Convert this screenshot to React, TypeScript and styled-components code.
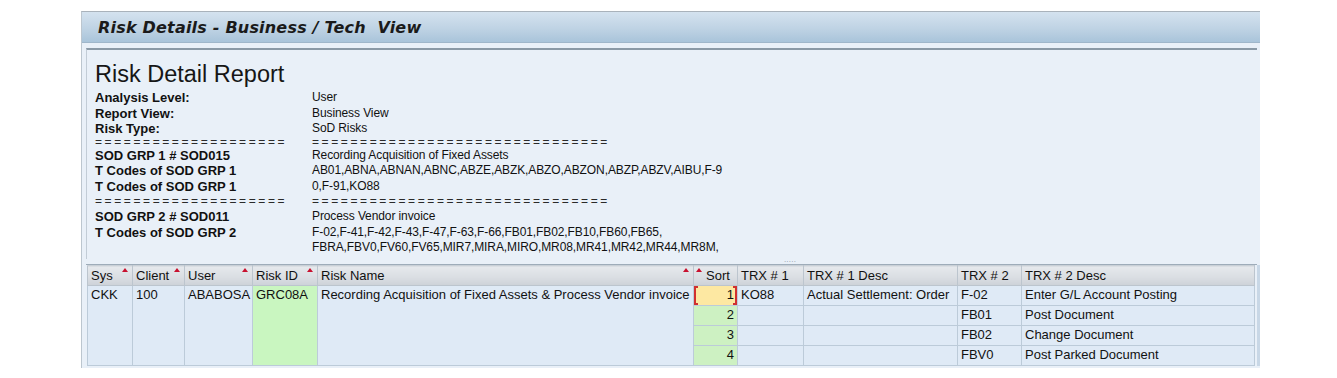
import React from 'react';
import styled, {createGlobalStyle} from 'styled-components';

const GlobalStyle = createGlobalStyle`
  html, body {
    margin: 0;
    padding: 0;
    background: #ffffff;
  }
  body {
    font-family: "Liberation Sans", Arial, sans-serif;
  }
`;

const Frame = styled.div`
  margin: 11px 0 0 81px;
  width: 1178px;
  border-top: 1px solid #a9b2bb;
  border-left: 1px solid #bcc6cf;
  background: #e9f0f8;
`;

const TitleBar = styled.div`
  height: 30px;
  display: flex;
  align-items: center;
  padding-left: 16px;
  background: linear-gradient(to bottom, #d4e2ef 0%, #bfd3e4 55%, #a9c4da 100%);
  border-bottom: 1px solid #9fb6ca;
  font-family: "DejaVu Sans", Verdana, sans-serif;
  font-weight: bold;
  font-style: italic;
  font-size: 16px;
  color: #1a1a1a;
  letter-spacing: 0.2px;
`;

const Body = styled.div`
  padding: 5px 3px 2px 4px;
`;

const ReportBox = styled.div`
  border-top: 2px solid #8a99a6;
  border-left: 1px solid #c2ccd6;
  padding: 10px 0 0 8px;
  height: 199px;
  color: #111;
`;

const ReportTitle = styled.div`
  font-size: 23.5px;
  line-height: 28px;
  color: #161616;
  margin-bottom: 2px;
`;

const Lines = styled.div`
  display: grid;
  grid-template-columns: 217px 1fr;
  font-size: 12px;
  line-height: 15.5px;
`;

const Label = styled.div`
  font-weight: bold;
  font-size: 13px;
`;

const Value = styled.div`
  letter-spacing: -0.1px;
`;

const Rule = styled.div<{ $tall?: boolean }>`
  font-size: 12px;
  letter-spacing: 2.6px;
  line-height: ${p => (p.$tall ? '15px' : '11px')};
  height: ${p => (p.$tall ? '15px' : '11px')};
  white-space: nowrap;
  color: #2a2a2a;
`;

const Splitter = styled.div`
  height: 5px;
  display: flex;
  justify-content: center;
  align-items: flex-start;
  padding-left: 237px;
  border-bottom: 1px solid #9eacb9;
  font-size: 8px;
  line-height: 2px;
  color: #8d99a5;
  letter-spacing: 0.2px;
`;

const GridWrap = styled.div`
  margin-left: 1px;
  width: 1170px;
  border-right: 3px solid #c8d7e6;
`;

const Table = styled.table`
  border-collapse: collapse;
  table-layout: fixed;
  width: 1167px;
  font-size: 13px;
  color: #111;
`;

const Th = styled.th<{ $sort?: 'left' | 'right' }>`
  position: relative;
  height: 19px;
  padding: 0 3px;
  text-align: left;
  font-weight: normal;
  white-space: nowrap;
  background: linear-gradient(to bottom, #e6e9ed 0%, #d9dde2 60%, #cdd2d8 100%);
  border: 1px solid #bcc5ce;
  border-top: 1px solid #c9d0d7;
  padding-left: ${p => (p.$sort === 'left' ? '12px' : '3px')};
`;

const SortMark = styled.span<{ $side: 'left' | 'right' }>`
  position: absolute;
  top: 2px;
  ${p => (p.$side === 'left' ? 'left: 2px;' : 'right: 4px;')}
  width: 0;
  height: 0;
  border-left: 3px solid transparent;
  border-right: 3px solid transparent;
  border-bottom: 4px solid #c8102e;
`;

type Tone = 'plain' | 'key' | 'sort' | 'current';

const tones: Record<Tone, string> = {
  plain: '#dfeaf6',
  key: '#c9f6c0',
  sort: '#cdf1c2',
  current: '#fde8a2',
};

const Td = styled.td<{ $tone?: Tone; $right?: boolean }>`
  position: relative;
  height: 19px;
  padding: 0 3px;
  vertical-align: top;
  line-height: 18px;
  white-space: nowrap;
  overflow: hidden;
  background: ${p => tones[p.$tone || 'plain']};
  border: 1px solid #bccbd9;
  text-align: ${p => (p.$right ? 'right' : 'left')};
`;

const Bracket = styled.span<{ $side: 'left' | 'right' }>`
  position: absolute;
  top: 0;
  bottom: 0;
  ${p => (p.$side === 'left' ? 'left: 0; border-left: 2px solid #d03030;' : 'right: 0; border-right: 2px solid #d03030;')}
  width: 4px;
  border-top: 2px solid #d03030;
  border-bottom: 2px solid #d03030;
  box-sizing: border-box;
`;

const Hidden = styled.span`
  visibility: hidden;
`;

const reportLines: [string, string][] = [
  ['Analysis Level:', 'User'],
  ['Report View:', 'Business View'],
  ['Risk Type:', 'SoD Risks'],
  ['=', '='],
  ['SOD GRP 1 # SOD015', 'Recording Acquisition of Fixed Assets'],
  ['T Codes of SOD GRP 1', 'AB01,ABNA,ABNAN,ABNC,ABZE,ABZK,ABZO,ABZON,ABZP,ABZV,AIBU,F-9'],
  ['T Codes of SOD GRP 1', '0,F-91,KO88'],
  ['==', '=='],
  ['SOD GRP 2 # SOD011', 'Process Vendor invoice'],
  ['T Codes of SOD GRP 2', 'F-02,F-41,F-42,F-43,F-47,F-63,F-66,FB01,FB02,FB10,FB60,FB65,'],
  ['', 'FBRA,FBV0,FV60,FV65,MIR7,MIRA,MIRO,MR08,MR41,MR42,MR44,MR8M,'],
];

const columns = [
  {title: 'Sys', width: 45, sort: 'right'},
  {title: 'Client', width: 52, sort: 'right'},
  {title: 'User', width: 68, sort: 'right'},
  {title: 'Risk ID', width: 65, sort: 'right'},
  {title: 'Risk Name', width: 376, sort: 'right'},
  {title: 'Sort', width: 44, sort: 'left'},
  {title: 'TRX # 1', width: 66},
  {title: 'TRX # 1 Desc', width: 154},
  {title: 'TRX # 2', width: 64},
  {title: 'TRX # 2 Desc', width: 233},
] as { title: string; width: number; sort?: 'left' | 'right' }[];

const rows = [
  {sort: '1', trx1: 'KO88', desc1: 'Actual Settlement: Order', trx2: 'F-02', desc2: 'Enter G/L Account Posting'},
  {sort: '2', trx1: '', desc1: '', trx2: 'FB01', desc2: 'Post Document'},
  {sort: '3', trx1: '', desc1: '', trx2: 'FB02', desc2: 'Change Document'},
  {sort: '4', trx1: '', desc1: '', trx2: 'FBV0', desc2: 'Post Parked Document'},
];

const RULE_LEFT = '====================';
const RULE_RIGHT = '===============================';

function App() {
  return (
    <>
      <GlobalStyle/>
      <Frame>
        <TitleBar>Risk Details - Business / Tech&nbsp; View</TitleBar>
        <Body>
          <ReportBox>
            <ReportTitle>Risk Detail Report</ReportTitle>
            <Lines>
              {reportLines.map(([label, value], i) =>
                label.startsWith('=') ?
                  <React.Fragment key={i}>
                    <Rule $tall={label === '=='}>{RULE_LEFT}</Rule>
                    <Rule $tall={label === '=='}>{RULE_RIGHT}</Rule>
                  </React.Fragment> :
                  <React.Fragment key={i}>
                    <Label>{label || <Hidden>-</Hidden>}</Label>
                    <Value>{value}</Value>
                  </React.Fragment>
              )}
            </Lines>
          </ReportBox>
          <Splitter>.....</Splitter>
          <GridWrap>
            <Table>
              <colgroup>
                {columns.map(c => <col key={c.title} style={{width: c.width}}/>)}
              </colgroup>
              <thead>
                <tr>
                  {columns.map(c =>
                    <Th key={c.title} $sort={c.sort}>
                      {c.title}
                      {c.sort && <SortMark $side={c.sort}/>}
                    </Th>
                  )}
                </tr>
              </thead>
              <tbody>
                {rows.map((r, i) =>
                  <tr key={r.sort}>
                    {i === 0 &&
                      <>
                        <Td rowSpan={4}>CKK</Td>
                        <Td rowSpan={4}>100</Td>
                        <Td rowSpan={4}>ABABOSA</Td>
                        <Td rowSpan={4} $tone="key">GRC08A</Td>
                        <Td rowSpan={4}>Recording Acquisition of Fixed Assets &amp; Process Vendor invoice</Td>
                      </>
                    }
                    <Td $tone={i === 0 ? 'current' : 'sort'} $right>
                      {r.sort}
                      {i === 0 && <><Bracket $side="left"/><Bracket $side="right"/></>}
                    </Td>
                    <Td>{r.trx1}</Td>
                    <Td>{r.desc1}</Td>
                    <Td>{r.trx2}</Td>
                    <Td>{r.desc2}</Td>
                  </tr>
                )}
              </tbody>
            </Table>
          </GridWrap>
        </Body>
      </Frame>
    </>
  );
}

export default App;
